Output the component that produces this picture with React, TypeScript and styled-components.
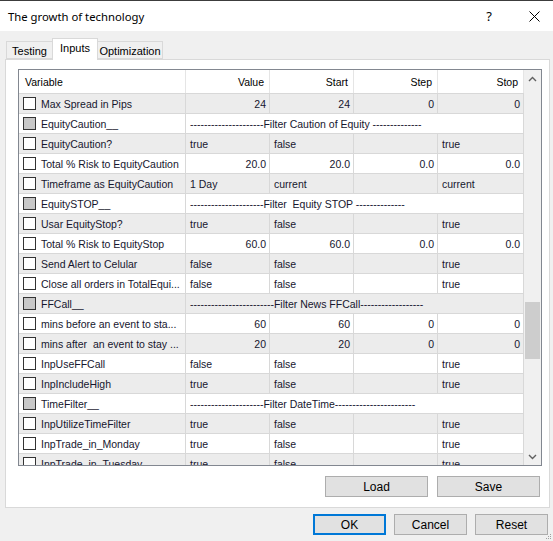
import React from "react";
import styled, { createGlobalStyle } from "styled-components";

const GlobalStyle = createGlobalStyle`
  html, body {
    margin: 0;
    padding: 0;
    background: #f0f0f0;
    overflow: hidden;
  }
`;

const ui = `"Liberation Sans", Arial, sans-serif`;
const title = `"Noto Sans", "Open Sans", sans-serif`;

type Row =
  | { kind: "sep"; name: string; text: string }
  | { kind: "num" | "text"; name: string; cells: string[] };

const dash = (n: number) => "-".repeat(n);

const rows: Row[] = [
  { kind: "num", name: "Max Spread in Pips", cells: ["24", "24", "0", "0"] },
  { kind: "sep", name: "EquityCaution__", text: `${dash(21)}Filter Caution of Equity ${dash(14)}` },
  { kind: "text", name: "EquityCaution?", cells: ["true", "false", "", "true"] },
  { kind: "num", name: "Total % Risk to EquityCaution", cells: ["20.0", "20.0", "0.0", "0.0"] },
  { kind: "text", name: "Timeframe as EquityCaution", cells: ["1 Day", "current", "", "current"] },
  { kind: "sep", name: "EquitySTOP__", text: `${dash(21)}Filter  Equity STOP ${dash(14)}` },
  { kind: "text", name: "Usar EquityStop?", cells: ["true", "false", "", "true"] },
  { kind: "num", name: "Total % Risk to EquityStop", cells: ["60.0", "60.0", "0.0", "0.0"] },
  { kind: "text", name: "Send Alert to Celular", cells: ["false", "false", "", "true"] },
  { kind: "text", name: "Close all orders in TotalEqui...", cells: ["false", "false", "", "true"] },
  { kind: "sep", name: "FFCall__", text: `${dash(24)}Filter News FFCall${dash(18)}` },
  { kind: "num", name: "mins before an event to sta...", cells: ["60", "60", "0", "0"] },
  { kind: "num", name: "mins after  an event to stay ...", cells: ["20", "20", "0", "0"] },
  { kind: "text", name: "InpUseFFCall", cells: ["false", "false", "", "true"] },
  { kind: "text", name: "InpIncludeHigh", cells: ["true", "false", "", "true"] },
  { kind: "sep", name: "TimeFilter__", text: `${dash(21)}Filter DateTime${dash(23)}` },
  { kind: "text", name: "InpUtilizeTimeFilter", cells: ["true", "false", "", "true"] },
  { kind: "text", name: "InpTrade_in_Monday", cells: ["true", "false", "", "true"] },
  { kind: "text", name: "InpTrade_in_Tuesday", cells: ["true", "false", "", "true"] },
];

const Window = styled.div`
  position: relative;
  width: 553px;
  height: 541px;
  display: flex;
  flex-direction: column;
  background: #f0f0f0;
  font-family: ${ui};
  color: #16162e;
`;

const TitleBar = styled.div`
  height: 30px;
  border-top: 1px solid #3c3c3c;
  background: #ffffff;
  display: flex;
  align-items: center;
  padding-left: 8px;
`;

const Title = styled.div`
  flex: 1;
  font-family: ${title};
  font-size: 11.3px;
  color: #000;
`;

const TitleButton = styled.div<{ $w: number }>`
  width: ${(p) => p.$w}px;
  height: 30px;
  display: flex;
  align-items: center;
  justify-content: center;
  font-family: ${title};
  font-size: 13px;
  color: #000;
`;

const TabStrip = styled.div`
  height: 28px;
  display: flex;
  align-items: flex-end;
  padding-left: 6px;
  position: relative;
  z-index: 1;
`;

const Tab = styled.div<{ $active?: boolean; $w: number }>`
  box-sizing: border-box;
  width: ${(p) => p.$w}px;
  height: ${(p) => (p.$active ? 22 : 18)}px;
  margin-bottom: ${(p) => (p.$active ? -1 : 0)}px;
  border: 1px solid #d9d9d9;
  border-bottom: ${(p) => (p.$active ? "none" : "1px solid #d9d9d9")};
  background: ${(p) => (p.$active ? "#ffffff" : "#f0f0f0")};
  font-size: 11px;
  color: #000;
  display: flex;
  justify-content: center;
  padding-top: ${(p) => (p.$active ? 3 : 3)}px;
  & + & {
    margin-left: -1px;
  }
`;

const Panel = styled.div`
  box-sizing: border-box;
  margin-left: 5px;
  width: 545px;
  height: 449px;
  border: 1px solid #d9d9d9;
  background: #ffffff;
  padding: 9px 7px 0 12px;
  display: flex;
  flex-direction: column;
`;

const Grid = styled.div`
  box-sizing: border-box;
  height: 397px;
  border: 1px solid #828790;
  display: flex;
  overflow: hidden;
`;

const Columns = styled.div`
  width: 505px;
  display: grid;
  grid-template-columns: 167px 84px 84px 84px 86px;
  grid-auto-rows: 20px;
  grid-template-rows: 23px;
  align-content: start;
  font-size: 10.5px;
`;

const HeadCell = styled.div<{ $left?: boolean }>`
  box-sizing: border-box;
  border-right: 1px solid #e5e5e5;
  background: #ffffff;
  display: flex;
  align-items: center;
  justify-content: ${(p) => (p.$left ? "flex-start" : "flex-end")};
  padding: 0 5px 0 6px;
  color: #000;
`;

const Cell = styled.div<{ $alt: boolean; $right?: boolean; $span?: number }>`
  box-sizing: border-box;
  grid-column: span ${(p) => p.$span ?? 1};
  border-top: 1px solid #d8d8d8;
  border-right: 1px solid #d8d8d8;
  background: ${(p) => (p.$alt ? "#ececec" : "#ffffff")};
  display: flex;
  align-items: center;
  justify-content: ${(p) => (p.$right ? "flex-end" : "flex-start")};
  padding: 0 3px 0 4px;
  white-space: pre;
  overflow: hidden;
`;

const NameCell = styled(Cell)`
  gap: 5px;
`;

const Check = styled.span<{ $group?: boolean }>`
  box-sizing: border-box;
  width: 13px;
  height: 13px;
  flex: none;
  border: 1px solid #333333;
  background: ${(p) => (p.$group ? "#c8c8c8" : "#ffffff")};
`;

const ScrollBar = styled.div`
  width: 17px;
  background: #f0f0f0;
  display: flex;
  flex-direction: column;
  align-items: center;
`;

const Arrow = styled.div`
  height: 17px;
  width: 17px;
  display: flex;
  align-items: center;
  justify-content: center;
`;

const Thumb = styled.div`
  width: 15px;
  height: 57px;
  margin-top: 215px;
  background: #cdcdcd;
`;

const Spacer = styled.div`
  flex: 1;
`;

const ButtonRow = styled.div<{ $gap: number }>`
  display: flex;
  justify-content: flex-end;
  gap: ${(p) => p.$gap}px;
`;

const PanelButtons = styled(ButtonRow)`
  margin-top: 10px;
  margin-right: 2px;
`;

const Footer = styled(ButtonRow)`
  margin-top: 6px;
  padding-right: 5px;
`;

const Button = styled.div<{ $w: number; $default?: boolean }>`
  box-sizing: border-box;
  width: ${(p) => p.$w}px;
  height: 21px;
  background: #e1e1e1;
  border: ${(p) => (p.$default ? "2px solid #0078d7" : "1px solid #adadad")};
  display: flex;
  align-items: center;
  justify-content: center;
  font-size: 12px;
  color: #000;
`;

const Grip = styled.svg`
  position: absolute;
  right: 1px;
  bottom: 1px;
`;

const Chevron = ({ up }: { up?: boolean }) => (
  <svg width="9" height="6" viewBox="0 0 9 6">
    <polyline
      points={up ? "1,5 4.5,1.5 8,5" : "1,1 4.5,4.5 8,1"}
      fill="none"
      stroke="#606060"
      strokeWidth="1.4"
    />
  </svg>
);

export default function App() {
  return (
    <>
      <GlobalStyle />
      <Window>
        <TitleBar>
          <Title>The growth of technology</Title>
          <TitleButton $w={52}>?</TitleButton>
          <TitleButton $w={38}>
            <svg width="11" height="11" viewBox="0 0 11 11">
              <path d="M0.5 0.5 L10.5 10.5 M10.5 0.5 L0.5 10.5" stroke="#000" strokeWidth="1" />
            </svg>
          </TitleButton>
        </TitleBar>
        <TabStrip>
          <Tab $w={47}>Testing</Tab>
          <Tab $w={46} $active>
            Inputs
          </Tab>
          <Tab $w={66}>Optimization</Tab>
        </TabStrip>
        <Panel>
          <Grid>
            <Columns>
              <HeadCell $left>Variable</HeadCell>
              <HeadCell>Value</HeadCell>
              <HeadCell>Start</HeadCell>
              <HeadCell>Step</HeadCell>
              <HeadCell>Stop</HeadCell>
              {rows.map((r, i) => {
                const alt = i % 2 === 0;
                return (
                  <React.Fragment key={i}>
                    <NameCell $alt={alt}>
                      <Check $group={r.kind === "sep"} />
                      {r.name}
                    </NameCell>
                    {r.kind === "sep" ? (
                      <Cell $alt={alt} $span={4}>
                        {r.text}
                      </Cell>
                    ) : (
                      r.cells.map((c, j) => (
                        <Cell key={j} $alt={alt} $right={r.kind === "num"}>
                          {c}
                        </Cell>
                      ))
                    )}
                  </React.Fragment>
                );
              })}
            </Columns>
            <ScrollBar>
              <Arrow>
                <Chevron up />
              </Arrow>
              <Thumb />
              <Spacer />
              <Arrow>
                <Chevron />
              </Arrow>
            </ScrollBar>
          </Grid>
          <PanelButtons $gap={9}>
            <Button $w={103}>Load</Button>
            <Button $w={103}>Save</Button>
          </PanelButtons>
        </Panel>
        <Footer $gap={8}>
          <Button $w={73} $default>
            OK
          </Button>
          <Button $w={73}>Cancel</Button>
          <Button $w={73}>Reset</Button>
        </Footer>
        <Grip width="6" height="6" viewBox="0 0 6 6">
          <rect x="4" y="0" width="1" height="1" fill="#a0a0a0" />
          <rect x="2" y="2" width="1" height="1" fill="#a0a0a0" />
          <rect x="4" y="2" width="1" height="1" fill="#a0a0a0" />
          <rect x="0" y="4" width="1" height="1" fill="#a0a0a0" />
          <rect x="2" y="4" width="1" height="1" fill="#a0a0a0" />
          <rect x="4" y="4" width="1" height="1" fill="#a0a0a0" />
        </Grip>
      </Window>
    </>
  );
}
